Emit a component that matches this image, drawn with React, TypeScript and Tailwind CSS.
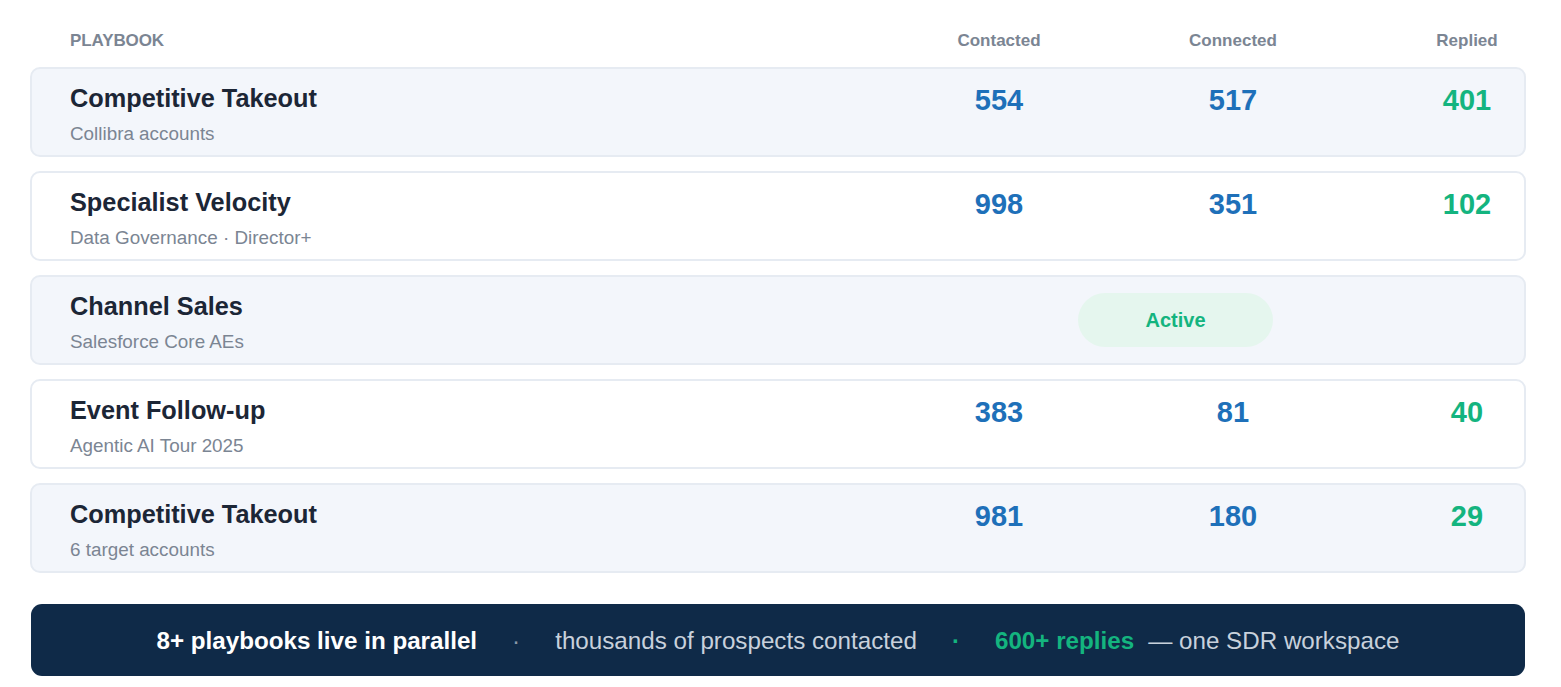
import React from 'react';

type Playbook = {
  title: string;
  subtitle: string;
  contacted?: number;
  connected?: number;
  replied?: number;
  active?: boolean;
};

const playbooks: Playbook[] = [
  { title: 'Competitive Takeout', subtitle: 'Collibra accounts', contacted: 554, connected: 517, replied: 401 },
  { title: 'Specialist Velocity', subtitle: 'Data Governance · Director+', contacted: 998, connected: 351, replied: 102 },
  { title: 'Channel Sales', subtitle: 'Salesforce Core AEs', active: true },
  { title: 'Event Follow-up', subtitle: 'Agentic AI Tour 2025', contacted: 383, connected: 81, replied: 40 },
  { title: 'Competitive Takeout', subtitle: '6 target accounts', contacted: 981, connected: 180, replied: 29 },
];

const grid = 'grid grid-cols-[1fr_114px_114px_114px] gap-x-[120px]';

function PlaybookRow({ playbook, shaded }: { playbook: Playbook; shaded: boolean }) {
  return (
    <div
      className={`h-[90px] rounded-[10px] border-2 border-[#e6ebf2] pl-[38px] pt-[13px] ${
        shaded ? 'bg-[#f3f6fb]' : 'bg-white'
      }`}
    >
      <div className={`${grid} items-start`}>
        <div className="flex flex-col gap-[8px]">
          <p className="text-[25.3px] font-bold leading-[32px] text-[#1c2636]">{playbook.title}</p>
          <p className="text-[18.85px] leading-[24px] text-[#7b8593]">{playbook.subtitle}</p>
        </div>
        {playbook.active ? (
          <div className="col-span-3 ml-[136px] mt-[3px] flex h-[54px] w-[195px] items-center justify-center rounded-full bg-[#e5f6ee]">
            <span className="text-[20px] font-bold text-[#14b47f]">Active</span>
          </div>
        ) : (
          <>
            <p className="text-center text-[29px] font-bold leading-[36px] text-[#1e70b9]">{playbook.contacted}</p>
            <p className="text-center text-[29px] font-bold leading-[36px] text-[#1e70b9]">{playbook.connected}</p>
            <p className="text-center text-[29px] font-bold leading-[36px] text-[#14b47f]">{playbook.replied}</p>
          </>
        )}
      </div>
    </div>
  );
}

export default function App() {
  return (
    <div className="min-h-screen bg-white pt-[29px] pl-[30px] font-['Liberation_Sans',Arial,sans-serif]">
      <div className="w-[1496px]">
        <div className={`${grid} h-[24px] pl-[40px] pr-[2px] text-[17px] font-bold leading-[24px] text-[#7b8593]`}>
          <span className="tracking-[-0.1px]">PLAYBOOK</span>
          <span className="text-center">Contacted</span>
          <span className="text-center">Connected</span>
          <span className="text-center">Replied</span>
        </div>

        <div className="mt-[14px] flex flex-col gap-[14px]">
          {playbooks.map((p, i) => (
            <PlaybookRow key={i} playbook={p} shaded={i % 2 === 0} />
          ))}
        </div>

        <div className="mx-[1px] mt-[31px] flex h-[72px] items-center justify-center gap-[35px] rounded-[11px] bg-[#0f2a48] pt-[2px] text-[24.2px] leading-[32px]">
          <span className="font-bold text-white">8+ playbooks live in parallel</span>
          <span className="text-[#8b97a8]">·</span>
          <span className="text-[#c8d1dc]">thousands of prospects contacted</span>
          <span className="font-bold text-[#14b47f]">·</span>
          <span>
            <span className="font-bold text-[#14b47f]">600+ replies</span>
            <span className="ml-[14px] text-[#c8d1dc]">— one SDR workspace</span>
          </span>
        </div>
      </div>
    </div>
  );
}
